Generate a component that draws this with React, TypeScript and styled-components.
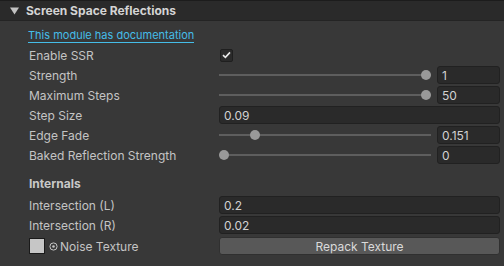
import * as React from 'react';
import styled, { createGlobalStyle } from 'styled-components';

const Global = createGlobalStyle`
html, body {
  margin:0;
  padding:0;
  background:#383838;
}
body {
  font-family:Inter, "Noto Sans", sans-serif;
  font-size:12px;
  color:#c4c4c4;
}
`;

const Panel = styled.div`
width:504px;
height:266px;
background:#383838;
border-top:1px solid #1c1c1c;
box-sizing:border-box;
overflow:hidden;
`;

const Header = styled.div`
height:19px;
background:#2a2a2a;
display:flex;
align-items:center;
gap:7px;
padding-left:10px;
border-bottom:1px solid #242424;
`;

const HeaderTitle = styled.span`
font-weight:700;
color:#d4d4d4;
font-size:12px;
`;

const Body = styled.div`
padding:4px 4px 0 29px;
display:flex;
flex-direction:column;
`;

const LinkRow = styled.div`
height:20px;
display:flex;
align-items:center;
margin-left:-1px;
`;

const DocLink = styled.a`
color:#45bde8;
font-size:11px;
text-decoration:none;
border-bottom:1px solid #45bde8;
line-height:14px;
`;

const Row = styled.div<{ $gap?: number }>`
height:20px;
display:grid;
grid-template-columns:190px 1fr;
align-items:center;
margin-top:${p => p.$gap ?? 0}px;
`;

const Label = styled.span`
white-space:nowrap;
display:flex;
align-items:center;
`;

const SectionTitle = styled.div`
height:20px;
display:flex;
align-items:center;
font-weight:700;
color:#c8c8c8;
margin-top:8px;
margin-bottom:2px;
`;

const Field = styled.div`
height:18px;
box-sizing:border-box;
background:#2a2a2a;
border:1px solid #212121;
border-radius:3px;
padding-left:4px;
display:flex;
align-items:center;
color:#d2d2d2;
`;

const SliderWrap = styled.div`
display:grid;
grid-template-columns:1fr 63px;
gap:6px;
align-items:center;
`;

const Track = styled.div`
position:relative;
height:18px;
&::before {
  content:'';
  position:absolute;
  left:0;
  right:0;
  top:8px;
  height:2px;
  background:#5e5e5e;
}
`;

const Thumb = styled.div`
position:absolute;
top:4px;
width:10px;
height:10px;
border-radius:50%;
background:#999999;
margin-left:-5px;
`;

const CheckBox = styled.div`
width:13px;
height:13px;
box-sizing:border-box;
margin-left:1px;
background:#2a2a2a;
border:1px solid #1f1f1f;
border-radius:2px;
display:flex;
align-items:center;
justify-content:center;
`;

const Swatch = styled.div`
width:16px;
height:16px;
box-sizing:border-box;
background:#c6c6c6;
border:1px solid #1a1a1a;
margin-right:4px;
`;

const Button = styled.div`
height:18px;
box-sizing:border-box;
background:#585858;
border:1px solid #303030;
border-radius:3px;
display:flex;
align-items:center;
justify-content:center;
color:#dadada;
`;

const Slider = ({ value, text }: { value: number; text: string }) => (
  <SliderWrap>
    <Track>
      <Thumb style={{ left: `calc(5px + (100% - 10px) * ${value})` }} />
    </Track>
    <Field>{text}</Field>
  </SliderWrap>
);

const App = () => (
  <Panel>
    <Global />
    <Header>
      <svg width="9" height="8" viewBox="0 0 9 8">
        <path d="M0 0.5 H9 L4.5 7.5 Z" fill="#c2c2c2" />
      </svg>
      <HeaderTitle>Screen Space Reflections</HeaderTitle>
    </Header>
    <Body>
      <LinkRow>
        <DocLink href="#">This module has documentation</DocLink>
      </LinkRow>
      <Row>
        <Label>Enable SSR</Label>
        <CheckBox>
          <svg width="9" height="8" viewBox="0 0 9 8">
            <path d="M1 4.2 L3.4 6.4 L8 1.4" fill="none" stroke="#e8e8e8" strokeWidth="1.6" />
          </svg>
        </CheckBox>
      </Row>
      <Row>
        <Label>Strength</Label>
        <Slider value={1} text="1" />
      </Row>
      <Row>
        <Label>Maximum Steps</Label>
        <Slider value={1} text="50" />
      </Row>
      <Row>
        <Label>Step Size</Label>
        <Field>0.09</Field>
      </Row>
      <Row>
        <Label>Edge Fade</Label>
        <Slider value={0.151} text="0.151" />
      </Row>
      <Row>
        <Label>Baked Reflection Strength</Label>
        <Slider value={0} text="0" />
      </Row>
      <SectionTitle>Internals</SectionTitle>
      <Row>
        <Label>Intersection (L)</Label>
        <Field>0.2</Field>
      </Row>
      <Row>
        <Label>Intersection (R)</Label>
        <Field>0.02</Field>
      </Row>
      <Row $gap={1}>
        <Label>
          <Swatch />
          <svg width="9" height="9" viewBox="0 0 9 9" style={{ marginRight: 2 }}>
            <circle cx="4.5" cy="4.5" r="3.6" fill="none" stroke="#c4c4c4" strokeWidth="1" />
            <circle cx="4.5" cy="4.5" r="1.3" fill="#c4c4c4" />
          </svg>
          Noise Texture
        </Label>
        <Button>Repack Texture</Button>
      </Row>
    </Body>
  </Panel>
);

export default App;
